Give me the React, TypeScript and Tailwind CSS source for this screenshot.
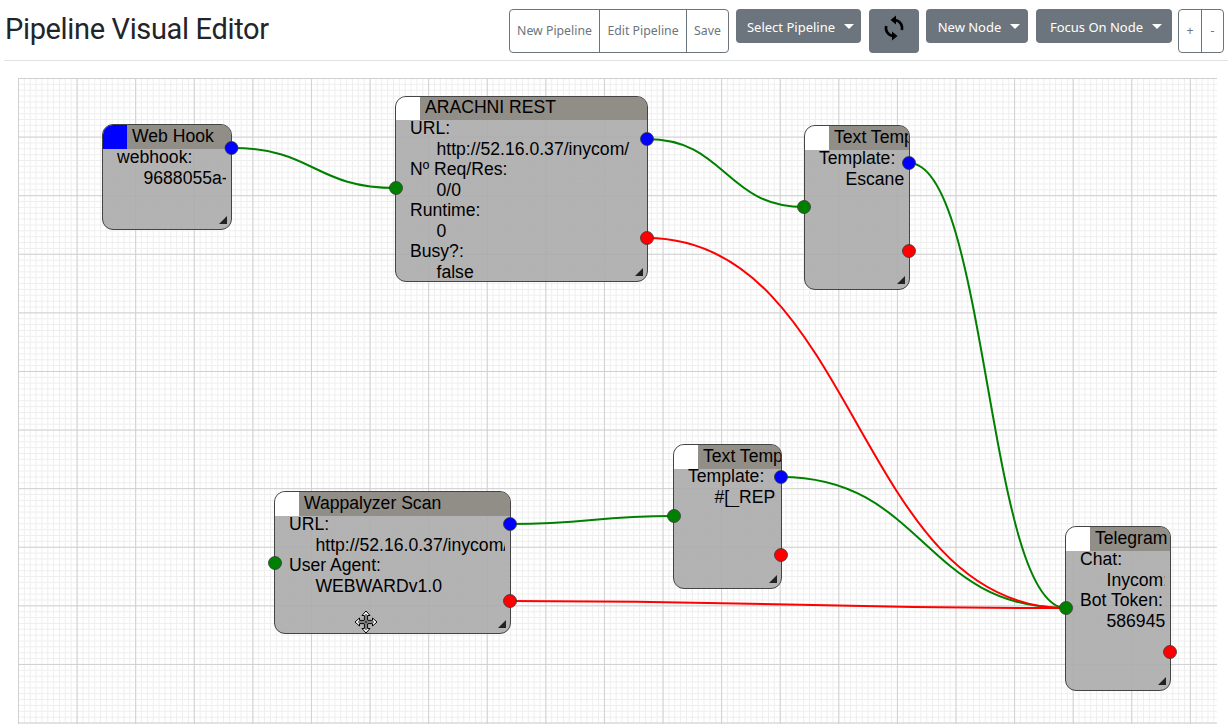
interface NodeData {
  title: string
  left: number
  top: number
  width: number
  height: number
  headerHeight: number
  rowsTop: number
  badge: string
  rows: [string, string][]
}

const NODES: NodeData[] = [
  { title: "Web Hook", left: 84, top: 46, width: 130, height: 106, headerHeight: 24, rowsTop: -2, badge: "#0000ff", rows: [["webhook:", "9688055a-"]] },
  {
    title: "ARACHNI REST", left: 377, top: 18, width: 253, height: 186, headerHeight: 23, rowsTop: -2, badge: "#ffffff",
    rows: [["URL:", "http://52.16.0.37/inycom/"], ["Nº Req/Res:", "0/0"], ["Runtime:", "0"], ["Busy?:", "false"]],
  },
  { title: "Text Template", left: 786, top: 47, width: 106, height: 165, headerHeight: 24, rowsTop: -2, badge: "#ffffff", rows: [["Template:", "Escaneo de"]] },
  { title: "Text Template", left: 655, top: 366, width: 109, height: 145, headerHeight: 24, rowsTop: -3, badge: "#ffffff", rows: [["Template:", "#[_REPORT"]] },
  {
    title: "Wappalyzer Scan", left: 256, top: 413, width: 237, height: 143, headerHeight: 24, rowsTop: -2, badge: "#ffffff",
    rows: [["URL:", "http://52.16.0.37/inycom/"], ["User Agent:", "WEBWARDv1.0"]],
  },
  {
    title: "Telegram", left: 1047, top: 448, width: 106, height: 165, headerHeight: 24, rowsTop: -2, badge: "#ffffff",
    rows: [["Chat:", "Inycom:"], ["Bot Token:", "586945"]],
  },
]

// coordenadas relativas al canvas
const WIRES = [
  { x1: 214, y1: 70, x2: 378, y2: 110, color: "#008000" },
  { x1: 629, y1: 61, x2: 786, y2: 129, color: "#008000" },
  { x1: 891, y1: 85, x2: 1048, y2: 530, color: "#008000" },
  { x1: 763, y1: 399, x2: 1048, y2: 530, color: "#008000" },
  { x1: 492, y1: 446, x2: 656, y2: 438, color: "#008000" },
  { x1: 629, y1: 160, x2: 1048, y2: 530, color: "#ff0000" },
  { x1: 492, y1: 523, x2: 1048, y2: 530, color: "#ff0000" },
]

const PORTS = [
  { x: 213.5, y: 70, color: "#0000ff" },
  { x: 378, y: 110, color: "#008000" },
  { x: 629, y: 61, color: "#0000ff" },
  { x: 629, y: 160, color: "#ff0000" },
  { x: 786, y: 129, color: "#008000" },
  { x: 891, y: 85, color: "#0000ff" },
  { x: 891, y: 173, color: "#ff0000" },
  { x: 656, y: 438, color: "#008000" },
  { x: 763, y: 399, color: "#0000ff" },
  { x: 763, y: 477, color: "#ff0000" },
  { x: 257, y: 485, color: "#008000" },
  { x: 492, y: 446, color: "#0000ff" },
  { x: 492, y: 523, color: "#ff0000" },
  { x: 1048, y: 530, color: "#008000" },
  { x: 1152, y: 574, color: "#ff0000" },
]

function Caret() {
  return <span className="ml-[9px] inline-block border-x-[5px] border-t-[5px] border-x-transparent border-t-white align-middle" />
}

function Dropdown({ label, width }: { label: string; width: string }) {
  return (
    <button className={`flex h-[34px] items-center justify-center rounded bg-[#6c757d] pl-[4px] text-[13px] text-white ${width}`}>
      <span className="pt-[3px]">{label}</span>
      <Caret />
    </button>
  )
}

function OutlineButton({ label, width, last }: { label: string; width: string; last?: boolean }) {
  return (
    <button className={`flex h-full items-center justify-center pt-[1px] text-[12.3px] text-[#6c757d] ${width} ${last ? "" : "border-r border-[#6c757d]"}`}>
      {label}
    </button>
  )
}

function GraphNode({ node }: { node: NodeData }) {
  return (
    <div
      className="absolute flex flex-col overflow-hidden rounded-[11px] border border-[#444444] bg-[#ababab]/90 font-['Liberation_Sans',Arial,sans-serif] text-[17.6px] leading-[20.5px] text-black"
      style={{ left: node.left, top: node.top, width: node.width, height: node.height }}
    >
      <div className="flex shrink-0 bg-[#8f8b85]/95" style={{ height: node.headerHeight }}>
        <div className="w-[24px] shrink-0" style={{ backgroundColor: node.badge }} />
        <div className="ml-[5px] overflow-hidden whitespace-nowrap" style={{ lineHeight: `${node.headerHeight - 2}px` }}>
          {node.title}
        </div>
      </div>
      <div className="mr-[5px] ml-[14px] overflow-hidden whitespace-nowrap" style={{ marginTop: node.rowsTop }}>
        {node.rows.map(([label, value]) => (
          <div key={label}>
            <div>{label}</div>
            <div className="ml-[26.5px]">{value}</div>
          </div>
        ))}
      </div>
      <svg className="absolute right-[4px] bottom-[5px]" width="8" height="8" viewBox="0 0 8 8">
        <path d="M8 0V8H0Z" fill="#222222" />
      </svg>
    </div>
  )
}

function SyncIcon() {
  return (
    <svg width="24" height="28" viewBox="0 0 24 28" fill="none">
      <path d="M13 6A8 8 0 0 1 19.8 16" stroke="#000000" strokeWidth="2.6" />
      <path d="M11 22A8 8 0 0 1 4.2 12" stroke="#000000" strokeWidth="2.6" />
      <path d="M8.5 6 14 1.5V10.5Z" fill="#000000" />
      <path d="M15.5 22 10 26.5V17.5Z" fill="#000000" />
    </svg>
  )
}

function MoveCursor() {
  return (
    <svg className="absolute top-[532px] left-[336px]" width="24" height="24" viewBox="0 0 24 24">
      <path
        d="M12 1 16 5.5H13.6V10.4H18.5V8L23 12 18.5 16V13.6H13.6V18.5H16L12 23 8 18.5H10.4V13.6H5.5V16L1 12 5.5 8V10.4H10.4V5.5H8Z"
        fill="#ffffff"
        stroke="#000000"
        strokeWidth="1"
        strokeLinejoin="round"
      />
      <path d="M12 4V20M4 12H20" stroke="#000000" strokeWidth="1" />
    </svg>
  )
}

export default function App() {
  return (
    <div className="h-[724px] w-[1228px] overflow-hidden bg-white pl-[4px] font-['Noto_Sans',sans-serif]">
      <div className="flex h-[61px] items-start border-b border-[#e2e2e2] pt-[9px]">
        <h1 className="ml-px font-['Roboto',sans-serif] text-[29px] leading-[40px] tracking-[-0.35px] text-[#212529]">Pipeline Visual Editor</h1>
        <div className="ml-auto flex h-[44px] items-start">
          <div className="flex h-[44px] overflow-hidden rounded border border-[#6c757d]">
            <OutlineButton label="New Pipeline" width="w-[90px]" />
            <OutlineButton label="Edit Pipeline" width="w-[87px]" />
            <OutlineButton label="Save" width="w-[41px]" last />
          </div>
          <div className="ml-[7px]">
            <Dropdown label="Select Pipeline" width="w-[125px]" />
          </div>
          <button className="ml-[8px] flex h-[44px] w-[50px] items-center justify-center rounded bg-[#6c757d] pb-[6px] text-black">
            <SyncIcon />
          </button>
          <div className="ml-[7px]">
            <Dropdown label="New Node" width="w-[102px]" />
          </div>
          <div className="ml-[8px]">
            <Dropdown label="Focus On Node" width="w-[136px]" />
          </div>
          <div className="mr-[4px] ml-[6px] flex h-[44px] overflow-hidden rounded border border-[#6c757d]">
            <OutlineButton label="+" width="w-[23px]" />
            <OutlineButton label="-" width="w-[21px]" last />
          </div>
        </div>
      </div>

      <div className="relative mt-[17px] ml-[14px] h-[646px] w-[1199px] overflow-hidden bg-[linear-gradient(#d0d0d0_1px,transparent_1px),linear-gradient(90deg,#d0d0d0_1px,transparent_1px),linear-gradient(#eeeeee_1px,transparent_1px),linear-gradient(90deg,#eeeeee_1px,transparent_1px)] bg-[size:58.6px_58.6px,58.6px_58.6px,5.86px_5.86px,5.86px_5.86px]">
        {NODES.map((node) => (
          <GraphNode key={`${node.title}-${node.left}`} node={node} />
        ))}
        <svg className="absolute inset-0" width="1199" height="646">
          {WIRES.map((w) => {
            const mid = (w.x1 + w.x2) / 2
            return (
              <path
                key={`${w.x1}-${w.y1}`}
                d={`M${w.x1} ${w.y1}C${mid} ${w.y1} ${mid} ${w.y2} ${w.x2} ${w.y2}`}
                fill="none"
                stroke={w.color}
                strokeWidth="2"
              />
            )
          })}
          {PORTS.map((p) => (
            <circle key={`${p.x}-${p.y}`} cx={p.x} cy={p.y} r="6.5" fill={p.color} stroke="#333333" strokeWidth="0.75" />
          ))}
        </svg>
        <MoveCursor />
      </div>
    </div>
  )
}
